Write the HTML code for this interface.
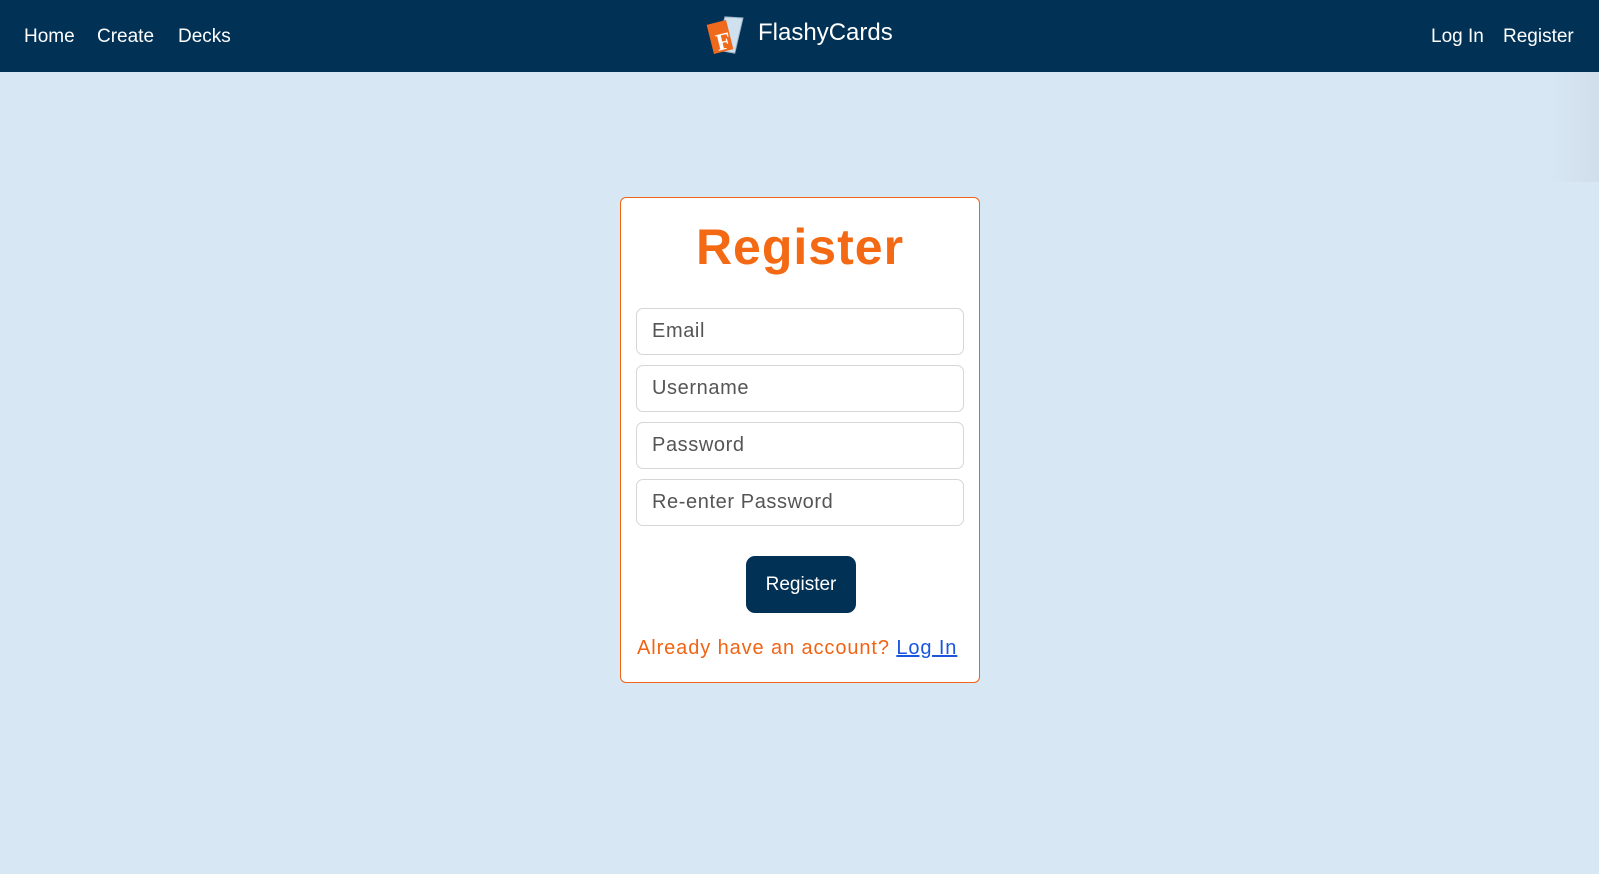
<!DOCTYPE html>
<html><head><style>
*{box-sizing:border-box;margin:0;padding:0}
body{width:1599px;height:874px;background:#d8e7f4;font-family:"Liberation Sans",sans-serif;position:relative;overflow:hidden}
nav{position:absolute;left:0;top:0;width:1599px;height:72px;background:#013155;color:#fff}
nav a{position:absolute;top:26px;font-size:19px;color:#fff;text-decoration:none}
.logo{position:absolute;left:706px;top:14px}
.brand{position:absolute;left:758px;top:19px;font-size:24px;color:#fff}
.card{position:absolute;left:620px;top:197px;width:360px;height:486px;background:#fff;border:1px solid #f06414;border-radius:6px}
h1{position:absolute;left:0;width:100%;top:20px;text-align:center;font-size:50px;color:#f46a14;font-weight:bold;letter-spacing:1px}
.in{position:absolute;left:15px;width:328px;height:47px;border:1px solid #d6d6d6;border-radius:7px;padding-left:15px;line-height:45px;font-size:20px;color:#555;letter-spacing:0.6px}
.btn{position:absolute;left:125px;top:358px;width:110px;height:57px;background:#013155;border-radius:9px;color:#fff;font-size:19px;text-align:center;line-height:57px}
.ft{position:absolute;left:16px;top:439px;font-size:20px;color:#f06414;letter-spacing:0.9px}
.ft u{color:#1a55e0}
.shade{position:absolute;right:0;top:72px;width:50px;height:110px;background:linear-gradient(90deg,rgba(0,0,0,0),rgba(0,0,0,0.04))}
</style></head><body>
<nav>
<a style="left:24px">Home</a><a style="left:97px">Create</a><a style="left:178px">Decks</a>
<svg class="logo" width="48" height="44" viewBox="0 0 48 44">
<path d="M16 4 L34 2 L32 38 L14 38 Z" fill="#cfe0ef" stroke="#9fb5c8" stroke-width="1" transform="rotate(10 24 20)"/>
<rect x="4" y="8" width="20" height="30" fill="#ef6a1c" transform="rotate(-14 14 23)"/>
<text x="9" y="36" font-size="24" font-weight="bold" fill="#fff" font-family="Liberation Serif" transform="rotate(-14 14 23)">F</text>
</svg>
<span class="brand">FlashyCards</span>
<a style="left:1431px">Log In</a><a style="left:1503px">Register</a>
</nav>
<div class="shade"></div>
<div class="card">
<h1>Register</h1>
<div class="in" style="top:110px">Email</div>
<div class="in" style="top:167px">Username</div>
<div class="in" style="top:224px">Password</div>
<div class="in" style="top:281px">Re-enter Password</div>
<div class="btn">Register</div>
<div class="ft">Already have an account? <u>Log In</u></div>
</div>
</body></html>
